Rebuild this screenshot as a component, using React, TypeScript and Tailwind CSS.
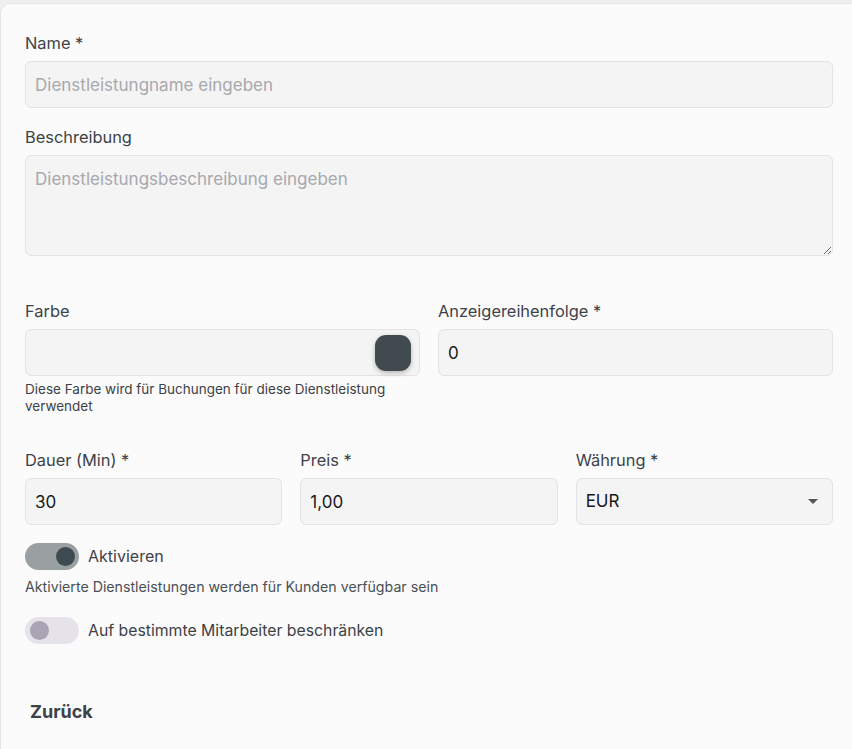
import { useState } from "react";

const inputCls =
  "w-full h-[47px] rounded-md border border-[#e3e3e3] bg-[#f4f4f4] px-[9px] text-[17px] text-[#18181b] placeholder:text-[#a8a8ae] outline-none";

function Label({ children }: { children: React.ReactNode }) {
  return <label className="block text-[16.4px] leading-[20px] text-[#3d4247] mb-[8px]">{children}</label>;
}

function Toggle({ on, onChange }: { on: boolean; onChange: () => void }) {
  return (
    <button
      onClick={onChange}
      className={`relative w-[54px] h-[27px] rounded-full shrink-0 ${on ? "bg-[#9a9fa1]" : "bg-[#e5e3e9]"}`}
    >
      <span
        className={`absolute top-[4px] w-[19px] h-[19px] rounded-full ${
          on ? "left-[31px] bg-[#3d4a4f]" : "left-[5px] bg-[#a9a3b4]"
        }`}
      />
    </button>
  );
}

export default function App() {
  const [active, setActive] = useState(true);
  const [restrict, setRestrict] = useState(false);

  return (
    <div className="min-h-[749px] bg-[#efefef] pt-[3px] font-['Inter',sans-serif]">
      <div className="min-h-[746px] bg-[#fbfbfb] rounded-tl-[10px] border-t border-l border-[#e6e6e6] pl-[24px] pr-[19px] pt-[29px] pb-[20px]">
        {/* Name */}
        <div>
          <Label>Name *</Label>
          <input className={inputCls} placeholder="Dienstleistungname eingeben" />
        </div>

        {/* Beschreibung */}
        <div className="mt-[19px]">
          <Label>Beschreibung</Label>
          <textarea
            className="block w-full h-[101px] rounded-md border border-[#e3e3e3] bg-[#f4f4f4] px-[9px] py-[12px] text-[17px] leading-[22px] text-[#18181b] placeholder:text-[#a8a8ae] outline-none"
            placeholder="Dienstleistungsbeschreibung eingeben"
          />
        </div>

        {/* Farbe / Anzeigereihenfolge */}
        <div className="mt-[45px] grid grid-cols-2 gap-[18px]">
          <div>
            <Label>Farbe</Label>
            <div className="h-[47px] rounded-md border border-[#e3e3e3] bg-[#f4f4f4] flex items-center justify-end pr-[8px]">
              <div className="w-[36px] h-[36px] rounded-[11px] bg-[#414b4f] shadow-[0_2px_5px_rgba(0,0,0,0.25)]" />
            </div>
            <p className="mt-[5px] text-[13.5px] leading-[17px] text-[#3d4247]">
              Diese Farbe wird für Buchungen für diese Dienstleistung verwendet
            </p>
          </div>
          <div>
            <Label>Anzeigereihenfolge *</Label>
            <input className={inputCls} defaultValue="0" />
          </div>
        </div>

        {/* Dauer / Preis / Währung */}
        <div className="mt-[35px] grid grid-cols-3 gap-[18px]">
          <div>
            <Label>Dauer (Min) *</Label>
            <input className={inputCls} defaultValue="30" />
          </div>
          <div>
            <Label>Preis *</Label>
            <input className={inputCls} defaultValue="1,00" />
          </div>
          <div>
            <Label>Währung *</Label>
            <div className="h-[47px] rounded-md border border-[#e3e3e3] bg-[#f4f4f4] flex items-center justify-between px-[9px] pr-[14px]">
              <span className="text-[17px] text-[#18181b]">EUR</span>
              <svg width="10" height="5" viewBox="0 0 10 5">
                <path d="M0 0 L10 0 L5 5 Z" fill="#555" />
              </svg>
            </div>
          </div>
        </div>

        {/* Toggles */}
        <div className="mt-[18px] flex items-center gap-[9px]">
          <Toggle on={active} onChange={() => setActive(!active)} />
          <span className="text-[16px] text-[#3d4247] -mt-[2px]">Aktivieren</span>
        </div>
        <p className="mt-[7px] text-[14.2px] leading-[20px] text-[#4a4f55]">
          Aktivierte Dienstleistungen werden für Kunden verfügbar sein
        </p>
        <div className="mt-[20px] flex items-center gap-[9px]">
          <Toggle on={restrict} onChange={() => setRestrict(!restrict)} />
          <span className="text-[15.8px] text-[#3d4247]">Auf bestimmte Mitarbeiter beschränken</span>
        </div>

        <button className="mt-[54px] ml-[5px] text-[18px] font-bold text-[#3d4247]">Zurück</button>
      </div>
    </div>
  );
}
